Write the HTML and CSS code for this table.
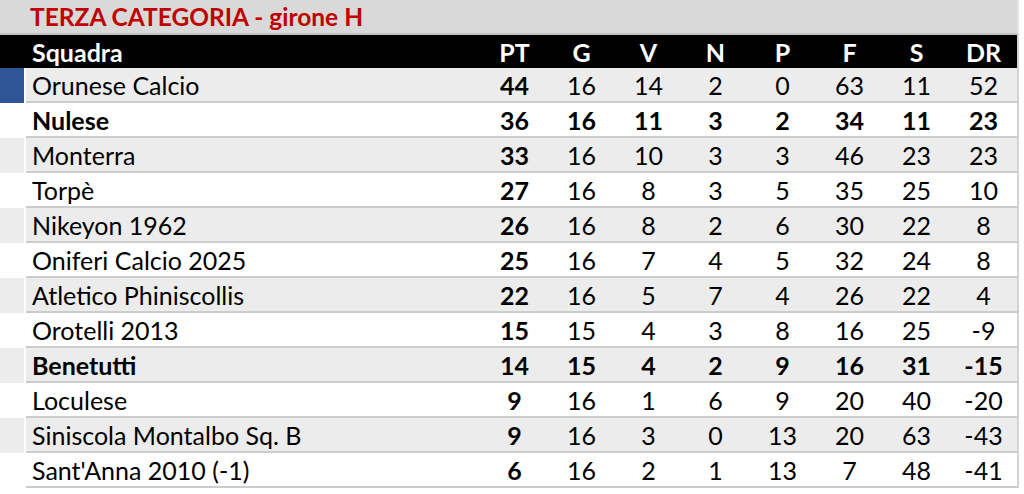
FILE: index.html
```html
<!DOCTYPE html>
<html lang="it">
<head>
<meta charset="utf-8">
<title>Terza Categoria - girone H</title>
<link rel="stylesheet" href="styles.css">
</head>
<body>
<div class="sheet">
  <div class="title-bar"><span class="title">TERZA CATEGORIA - girone H</span></div>
  <div class="row head">
    <div class="mark"></div>
    <div class="cells">
      <div class="name">Squadra</div><div class="num">PT</div><div class="num">G</div><div class="num">V</div><div class="num">N</div><div class="num">P</div><div class="num">F</div><div class="num">S</div><div class="num">DR</div>
    </div>
  </div>
  <div class="row alt leader">
    <div class="mark"></div>
    <div class="cells"><div class="name">Orunese Calcio</div><div class="num pt">44</div><div class="num">16</div><div class="num">14</div><div class="num">2</div><div class="num">0</div><div class="num">63</div><div class="num">11</div><div class="num">52</div></div>
  </div>
  <div class="row strong">
    <div class="mark"></div>
    <div class="cells"><div class="name">Nulese</div><div class="num pt">36</div><div class="num">16</div><div class="num">11</div><div class="num">3</div><div class="num">2</div><div class="num">34</div><div class="num">11</div><div class="num">23</div></div>
  </div>
  <div class="row alt">
    <div class="mark"></div>
    <div class="cells"><div class="name">Monterra</div><div class="num pt">33</div><div class="num">16</div><div class="num">10</div><div class="num">3</div><div class="num">3</div><div class="num">46</div><div class="num">23</div><div class="num">23</div></div>
  </div>
  <div class="row">
    <div class="mark"></div>
    <div class="cells"><div class="name">Torpè</div><div class="num pt">27</div><div class="num">16</div><div class="num">8</div><div class="num">3</div><div class="num">5</div><div class="num">35</div><div class="num">25</div><div class="num">10</div></div>
  </div>
  <div class="row alt">
    <div class="mark"></div>
    <div class="cells"><div class="name">Nikeyon 1962</div><div class="num pt">26</div><div class="num">16</div><div class="num">8</div><div class="num">2</div><div class="num">6</div><div class="num">30</div><div class="num">22</div><div class="num">8</div></div>
  </div>
  <div class="row">
    <div class="mark"></div>
    <div class="cells"><div class="name">Oniferi Calcio 2025</div><div class="num pt">25</div><div class="num">16</div><div class="num">7</div><div class="num">4</div><div class="num">5</div><div class="num">32</div><div class="num">24</div><div class="num">8</div></div>
  </div>
  <div class="row alt">
    <div class="mark"></div>
    <div class="cells"><div class="name">Atletico Phiniscollis</div><div class="num pt">22</div><div class="num">16</div><div class="num">5</div><div class="num">7</div><div class="num">4</div><div class="num">26</div><div class="num">22</div><div class="num">4</div></div>
  </div>
  <div class="row">
    <div class="mark"></div>
    <div class="cells"><div class="name">Orotelli 2013</div><div class="num pt">15</div><div class="num">15</div><div class="num">4</div><div class="num">3</div><div class="num">8</div><div class="num">16</div><div class="num">25</div><div class="num">-9</div></div>
  </div>
  <div class="row alt strong">
    <div class="mark"></div>
    <div class="cells"><div class="name">Benetutti</div><div class="num pt">14</div><div class="num">15</div><div class="num">4</div><div class="num">2</div><div class="num">9</div><div class="num">16</div><div class="num">31</div><div class="num">-15</div></div>
  </div>
  <div class="row">
    <div class="mark"></div>
    <div class="cells"><div class="name">Loculese</div><div class="num pt">9</div><div class="num">16</div><div class="num">1</div><div class="num">6</div><div class="num">9</div><div class="num">20</div><div class="num">40</div><div class="num">-20</div></div>
  </div>
  <div class="row alt">
    <div class="mark"></div>
    <div class="cells"><div class="name">Siniscola Montalbo Sq. B</div><div class="num pt">9</div><div class="num">16</div><div class="num">3</div><div class="num">0</div><div class="num">13</div><div class="num">20</div><div class="num">63</div><div class="num">-43</div></div>
  </div>
  <div class="row">
    <div class="mark"></div>
    <div class="cells"><div class="name">Sant'Anna 2010 (-1)</div><div class="num pt">6</div><div class="num">16</div><div class="num">2</div><div class="num">1</div><div class="num">13</div><div class="num">7</div><div class="num">48</div><div class="num">-41</div></div>
  </div>
</div>
</body>
</html>
```

FILE: styles.css
```css
html, body {
  margin: 0;
  padding: 0;
  background: #ffffff;
}

body {
  font-family: Lato, "Open Sans", "Liberation Sans", sans-serif;
  color: #000000;
}

.sheet {
  width: 1019px;
  display: flex;
  flex-direction: column;
}

.title-bar {
  height: 33px;
  background: #d9d9d9;
  border-bottom: 2px solid #c4c4c4;
  border-right: 2px solid #e6e6e6;
  display: flex;
  align-items: center;
  padding-left: 30px;
}

.title {
  color: #c00000;
  font-weight: 700;
  font-size: 24.5px;
  line-height: 1;
  margin-top: 2px;
}

.row {
  display: flex;
  height: 35px;
}

.mark {
  width: 24px;
  flex: none;
  background: #ffffff;
}

.cells {
  margin-left: 2px;
  width: 991px;
  display: grid;
  grid-template-columns: 455px repeat(8, 67px);
  align-items: center;
  background: #ffffff;
  border-bottom: 2px solid #cccccc;
  border-right: 2px solid #d4d4d4;
  font-size: 25px;
  line-height: 1;
}

.name {
  padding-left: 6px;
  white-space: nowrap;
  padding-top: 2px;
}

.num {
  text-align: center;
  padding-top: 2px;
}

.pt {
  font-weight: 700;
}

.row.alt .mark,
.row.alt .cells {
  background: #ececec;
}

.row.leader .mark {
  background: #2f5597;
}

.row.strong .cells {
  font-weight: 700;
}

.row.head {
  height: 33px;
  background: #000000;
}

.row.head .mark {
  background: #000000;
}

.row.head .cells {
  margin-left: 0;
  padding-left: 2px;
  background: #000000;
  color: #ffffff;
  font-weight: 700;
  border-bottom: 0;
  border-right: 2px solid #d4d4d4;
}
```
